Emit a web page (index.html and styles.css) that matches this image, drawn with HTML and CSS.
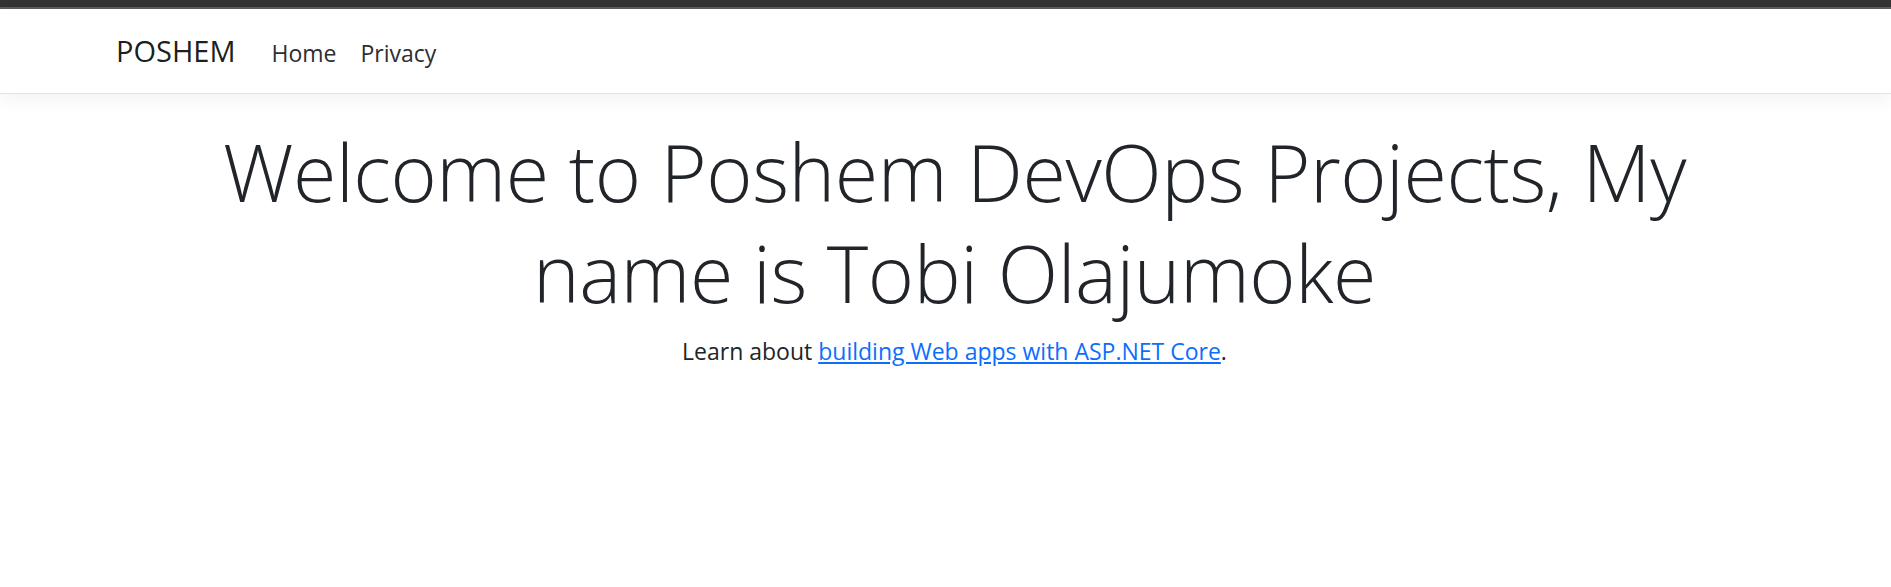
FILE: index.html
```html
<!DOCTYPE html>
<html lang="en">
<head>
<meta charset="utf-8">
<title>Home Page - POSHEM</title>
<link rel="stylesheet" href="styles.css">
</head>
<body>
<div class="topbar"></div>
<header class="navbar">
  <nav class="nav-inner">
    <a class="brand" href="#">POSHEM</a>
    <ul class="nav-links">
      <li><a class="nav-link" href="#">Home</a></li>
      <li><a class="nav-link" href="#">Privacy</a></li>
    </ul>
  </nav>
</header>
<div class="page-body">
  <main class="container">
    <div class="welcome">
      <h1 class="display">Welcome to Poshem DevOps Projects, My name is Tobi Olajumoke</h1>
      <p class="lead-text">Learn about <a href="#">building Web apps with ASP.NET Core</a>.</p>
    </div>
  </main>
</div>
</body>
</html>
```
FILE: styles.css
```css
html, body {
  margin: 0;
  padding: 0;
  background: #ffffff;
}

body {
  font-family: "Open Sans", "Noto Sans", sans-serif;
  color: #212529;
}

.topbar {
  height: 7px;
  background: #333333;
  border-bottom: 2px solid #5c5c5c;
}

.navbar {
  background: #ffffff;
  border-bottom: 1px solid #e3e3e3;
  box-shadow: 0 6px 18px rgba(0, 0, 0, 0.05);
  position: relative;
}

.nav-inner {
  display: flex;
  align-items: baseline;
  padding: 21px 0 21px 116px;
  height: 42px;
}

.brand {
  font-size: 29px;
  line-height: 42px;
  font-weight: 400;
  color: rgba(0, 0, 0, 0.9);
  text-decoration: none;
  margin-right: 24px;
}

.nav-links {
  display: flex;
  list-style: none;
  margin: 0;
  padding: 0;
}

.nav-link {
  display: block;
  padding: 0 12px;
  font-size: 23px;
  line-height: 34px;
  color: #2b2f33;
  text-decoration: none;
}

.page-body {
  padding-left: 18px;
}

.container {
  max-width: 1620px;
  margin: 0 auto;
}

.welcome {
  text-align: center;
  padding-top: 27px;
}

.display {
  margin: 0 0 10px;
  font-size: 79px;
  line-height: 101px;
  font-weight: 300;
  letter-spacing: -0.45px;
  color: #212529;
}

.lead-text {
  margin: 0;
  font-size: 23px;
  line-height: 36px;
  color: #212529;
}

.lead-text a {
  color: #0d6efd;
  text-decoration: underline;
}
```
